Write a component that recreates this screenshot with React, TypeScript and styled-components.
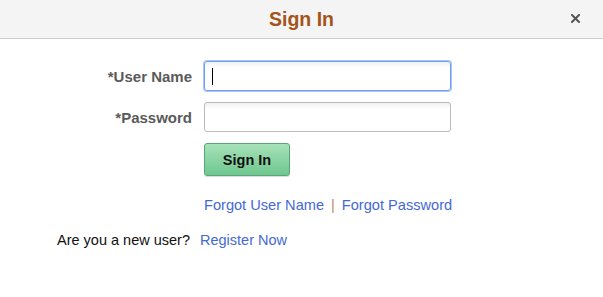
import { createGlobalStyle } from 'styled-components';
import styled from 'styled-components';

const GlobalStyle = createGlobalStyle`
  html, body {
    margin: 0;
    padding: 0;
    background: #ffffff;
    font-family: Arial, 'Liberation Sans', sans-serif;
  }
`;

function App() {
  return (
    <>
      <GlobalStyle />
      <Dialog>
        <Header>
          <Title>Sign In</Title>
          <CloseButton aria-label="Close">
            <svg width="9" height="9" viewBox="0 0 9 9">
              <path d="M1 1 L8 8 M8 1 L1 8" stroke="#555" strokeWidth="2" strokeLinecap="square" />
            </svg>
          </CloseButton>
        </Header>
        <Body>
          <Form>
            <Label htmlFor="userid">*User Name</Label>
            <FieldWrap>
              <Input id="userid" type="text" $focused />
              <Caret />
            </FieldWrap>
            <Label htmlFor="pwd">*Password</Label>
            <FieldWrap>
              <Input id="pwd" type="password" />
            </FieldWrap>
            <span />
            <div>
              <SubmitButton type="button">Sign In</SubmitButton>
            </div>
            <span />
            <Links>
              <Link href="#">Forgot User Name</Link>
              <Separator>|</Separator>
              <Link href="#">Forgot Password</Link>
            </Links>
          </Form>
          <RegisterRow>
            <span>Are you a new user?</span>
            <Link href="#">Register Now</Link>
          </RegisterRow>
        </Body>
      </Dialog>
    </>
  );
}

const Dialog = styled.div`
  width: 603px;
  height: 297px;
  background: #ffffff;
`;

const Header = styled.div`
  position: relative;
  height: 38px;
  display: flex;
  align-items: center;
  justify-content: center;
  background: #f4f4f4;
  border-bottom: 1px solid #cccccc;
`;

const Title = styled.h1`
  margin: 0;
  font-size: 19.5px;
  font-weight: bold;
  color: #a3541b;
`;

// sits over the header on its right edge
const CloseButton = styled.button`
  position: absolute;
  right: 21px;
  top: 12px;
  width: 13px;
  height: 13px;
  padding: 0;
  border: none;
  background: transparent;
  display: flex;
  align-items: center;
  justify-content: center;
  cursor: pointer;
`;

const Body = styled.div`
  padding-top: 22px;
`;

const Form = styled.div`
  display: grid;
  grid-template-columns: 192px 247px;
  column-gap: 12px;
  row-gap: 11px;
  align-items: center;
`;

const Label = styled.label`
  text-align: right;
  font-size: 15px;
  font-weight: bold;
  color: #5a5a5a;
`;

const FieldWrap = styled.div`
  position: relative;
  height: 30px;
`;

const Input = styled.input<{ $focused?: boolean }>`
  box-sizing: border-box;
  width: 247px;
  height: 30px;
  margin: 0;
  padding: 0 6px;
  font-family: inherit;
  font-size: 14px;
  border: 1px solid ${({ $focused }) => ($focused ? '#6d9ef2' : '#bbbbbb')};
  border-radius: 3px;
  background: linear-gradient(#f1f1f1 0px, #ffffff 6px, #ffffff 100%);
  box-shadow: ${({ $focused }) => ($focused ? '0 0 0 1px #a9c6f7' : 'none')};
  outline: none;
`;

// text caret drawn in the focused field
const Caret = styled.span`
  position: absolute;
  left: 8px;
  top: 7px;
  width: 1px;
  height: 17px;
  background: #000000;
`;

const SubmitButton = styled.button`
  box-sizing: border-box;
  width: 86px;
  height: 33px;
  margin: 0;
  padding: 0;
  font-family: inherit;
  font-size: 14.5px;
  font-weight: bold;
  color: #111111;
  border: 1px solid #5aa578;
  border-radius: 3px;
  background: linear-gradient(#a6e2b8, #6fc78f);
  box-shadow: 0 1px 1px rgba(0, 0, 0, 0.15);
  cursor: pointer;
`;

const Links = styled.div`
  display: flex;
  align-items: center;
  gap: 7px;
  padding-top: 10px;
  font-size: 14.6px;
  white-space: nowrap;
`;

const Link = styled.a`
  color: #4569d4;
  text-decoration: none;
`;

const Separator = styled.span`
  color: #c08f66;
`;

const RegisterRow = styled.div`
  display: flex;
  align-items: center;
  gap: 10px;
  padding: 19px 0 0 57px;
  font-size: 14.5px;
  color: #111111;
`;

export default App;
